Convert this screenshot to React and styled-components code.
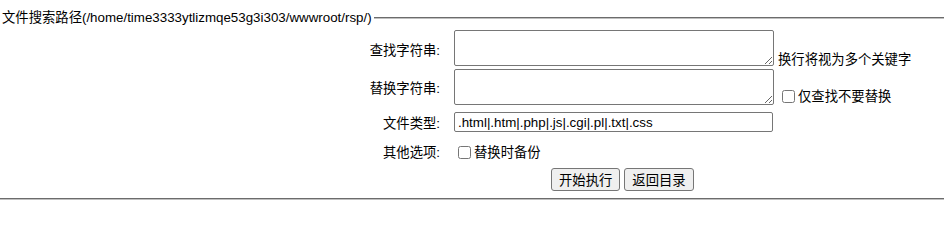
import React from "react";
import styled, { createGlobalStyle } from "styled-components";

const GlobalStyle = createGlobalStyle`
  html, body { background: #fff; }
  body {
    margin: 8px 0 0;
    font-family: "Liberation Sans", "Noto Sans CJK SC", "Microsoft YaHei", sans-serif;
    font-size: 13.33px;
    color: #000;
  }
`;

const Fieldset = styled.fieldset`
  margin: 0;
  padding: 3px 0 7px;
  min-width: 0;
  border: none;
  border-top: 2px groove rgb(192, 192, 192);
  border-bottom: 2px groove rgb(192, 192, 192);
`;

const Legend = styled.legend`
  padding: 0 2px;
  font-size: 13.33px;
  line-height: 19px;
`;

const FormGrid = styled.div`
  display: grid;
  grid-template-columns: 454px 320px 1fr;
  grid-auto-rows: auto;
  row-gap: 3px;
  align-items: center;
`;

const Label = styled.div`
  text-align: right;
  padding-right: 14px;
  line-height: 19px;
  padding-top: ${(p) => p.$nudge || 0}px;
`;

const ControlCell = styled.div`
  grid-column: 2 / 4;
  display: flex;
  align-items: ${(p) => (p.$bottom ? "flex-end" : "center")};
  min-height: ${(p) => p.$h || 0}px;
`;

const TextArea = styled.textarea`
  box-sizing: border-box;
  width: 320px;
  height: 36px;
  margin: 0;
  padding: 2px;
  border: 1px solid #767676;
  border-radius: 2px;
  font-family: inherit;
  font-size: 13.33px;
  flex: none;
`;

const TextInput = styled.input`
  box-sizing: border-box;
  width: 319px;
  height: 20px;
  margin: 0;
  padding: 1px 3px;
  border: 1px solid #767676;
  border-radius: 2px;
  font-family: inherit;
  font-size: 13.33px;
  color: #000;
`;

const Hint = styled.span`
  line-height: 15px;
  margin-left: ${(p) => p.$gap || 4}px;
  margin-bottom: -1px;
  display: inline-flex;
  align-items: center;
  white-space: nowrap;
`;

const Check = styled.input.attrs({ type: "checkbox" })`
  width: 13px;
  height: 13px;
  margin: 3px 3px 3px 4px;
`;

const CheckLabel = styled.label`
  display: inline-flex;
  align-items: center;
  line-height: 19px;
  white-space: nowrap;
`;

const ButtonBar = styled.div`
  grid-column: 2 / 4;
  display: flex;
  gap: 4px;
  padding-left: 97px;
`;

const Button = styled.button`
  box-sizing: border-box;
  height: 23px;
  padding: 0 7px;
  margin: 0;
  font-family: inherit;
  font-size: 13.33px;
  color: #000;
  background: #efefef;
  border: 1px solid #767676;
  border-radius: 3px;
`;

export default function App() {
  return (
    <>
      <GlobalStyle />
      <Fieldset>
        <Legend>文件搜索路径(/home/time3333ytlizmqe53g3i303/wwwroot/rsp/)</Legend>
        <FormGrid>
          <Label $nudge={4}>查找字符串:</Label>
          <ControlCell $bottom>
            <TextArea />
            <Hint>换行将视为多个关键字</Hint>
          </ControlCell>

          <Label $nudge={3}>替换字符串:</Label>
          <ControlCell $bottom>
            <TextArea />
            <Hint $gap={4}>
              <Check />
              仅查找不要替换
            </Hint>
          </ControlCell>

          <Label $nudge={3}>文件类型:</Label>
          <ControlCell $h={28}>
            <TextInput defaultValue=".html|.htm|.php|.js|.cgi|.pl|.txt|.css" />
          </ControlCell>

          <Label>其他选项:</Label>
          <ControlCell $h={26}>
            <CheckLabel>
              <Check />
              替换时备份
            </CheckLabel>
          </ControlCell>

          <ButtonBar>
            <Button>开始执行</Button>
            <Button>返回目录</Button>
          </ButtonBar>
        </FormGrid>
      </Fieldset>
    </>
  );
}
